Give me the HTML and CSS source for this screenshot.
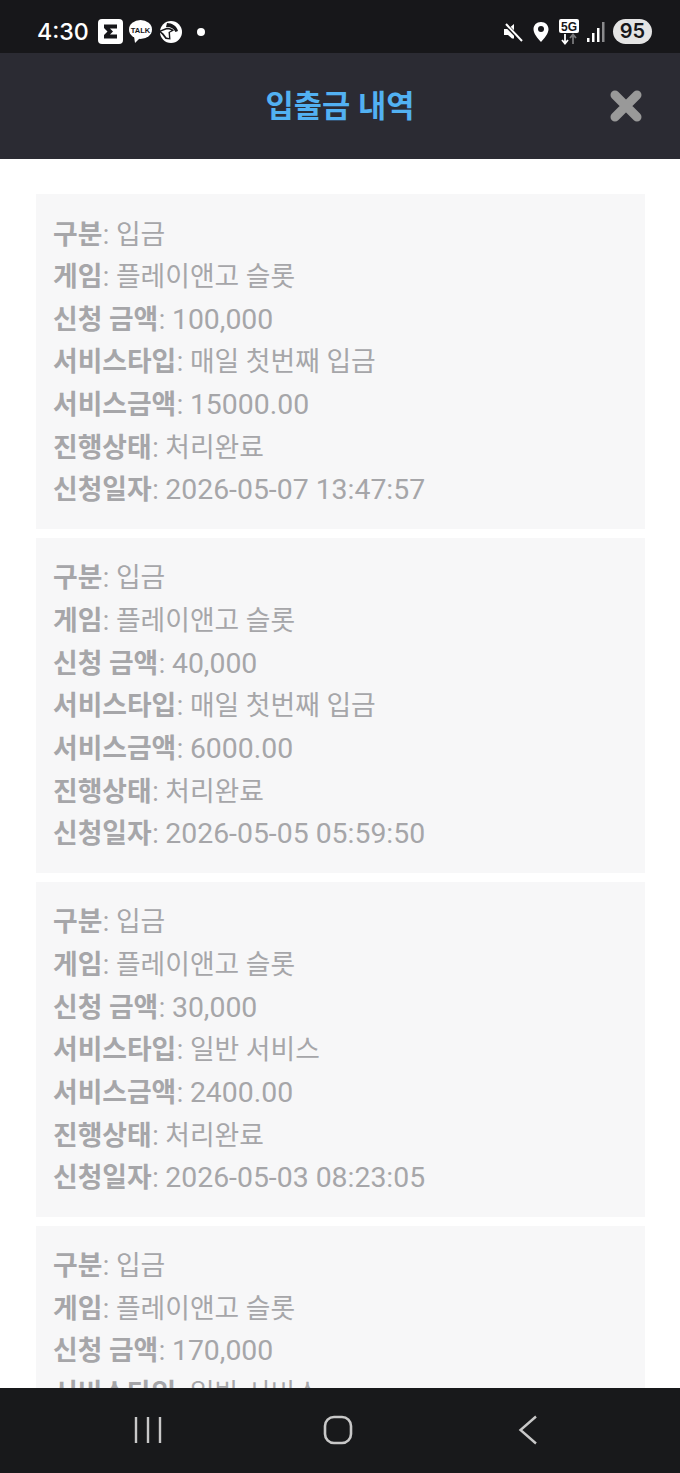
FILE: index.html
```html
<!DOCTYPE html>
<html lang="ko">
<head>
    <meta charset="UTF-8">
    <meta name="viewport" content="width=device-width, initial-scale=1.0">
    <title>입출금 내역</title>
    <link rel="stylesheet" href="styles.css">
</head>
<body>
    <div class="status-bar">
        <div class="status-left">
            <span class="clock">4:30</span>
            <svg class="status-icon" width="25" height="25" viewBox="0 0 25 25">
                <rect width="25" height="25" rx="4" fill="#fff"/>
                <path d="M6 5.500H19V9.500H12L15 12.500L12 15.500H19V19.500H6V16L9.500 12.500L6 9Z" fill="#17171a"/>
            </svg>
            <svg class="status-icon" width="23" height="23" viewBox="0 0 23 23">
                <ellipse cx="11.500" cy="9.500" rx="11.500" ry="9.500" fill="#fff"/>
                <path d="M5 16L6 23L11 18Z" fill="#fff"/>
                <text x="11.500" y="12.500" class="talk-label" text-anchor="middle">TALK</text>
            </svg>
            <svg class="status-icon" width="24" height="24" viewBox="0 0 24 24">
                <circle cx="13" cy="12" r="11" fill="#fff"/>
                <path d="M9 3C14 3 19 6 20 11L17.500 12C16 8.500 12 6.500 8 7Z" fill="#17171a"/>
                <path d="M0.500 11L8 8C11 7.500 14 8.500 16 10.500L12 12.500L12.500 19.500L7.500 19L4 14.500Z" fill="#17171a"/>
                <path d="M3 11.500L8.500 9.500C10.500 9.200 12.500 9.700 13.500 10.500L10.500 12L11 18L8.500 17.500L5.500 13.500Z" fill="#fff"/>
            </svg>
            <span class="status-dot"></span>
        </div>
        <div class="status-right">
            <svg class="mute-icon" width="20" height="22" viewBox="0 0 20 22">
                <path d="M0 8H4L10 3V17.500H8L4 14H0Z" fill="#fff"/>
                <path d="M1 3L18 20" stroke="#17171a" stroke-width="4"/>
                <path d="M2 3L18 20" stroke="#fff" stroke-width="2"/>
            </svg>
            <svg class="pin-icon" width="16" height="22" viewBox="0 0 16 22">
                <path d="M8 1C3.500 1 0.500 4.200 0.500 8.200C0.500 12.500 4.500 17 8 21C11.500 17 15.500 12.500 15.500 8.200C15.500 4.200 12.500 1 8 1Z" fill="#fff"/>
                <circle cx="8" cy="8" r="3" fill="#17171a"/>
            </svg>
            <svg class="network" width="20" height="26" viewBox="0 0 20 26">
                <rect width="20" height="14" rx="2" fill="#fff"/>
                <text x="10" y="11.500" class="net-label" text-anchor="middle">5G</text>
                <path d="M6 15V24M3 21L6 24.500L9 21" fill="none" stroke="#fff" stroke-width="1.800"/>
                <path d="M14 25V16M11 19L14 15.500L17 19" fill="none" stroke="#77777a" stroke-width="1.800"/>
            </svg>
            <svg width="18" height="20" viewBox="0 0 18 20">
                <rect x="0" y="16" width="2.500" height="4" fill="#fff"/>
                <rect x="5" y="11" width="2.500" height="9" fill="#fff"/>
                <rect x="10" y="6" width="2.500" height="14" fill="#fff"/>
                <rect x="15" y="0" width="2.500" height="20" fill="#8a8a8c"/>
            </svg>
            <span class="battery">95</span>
        </div>
    </div>

    <header class="title-bar">
        <h1>입출금 내역</h1>
        <button class="close-btn" aria-label="닫기">
            <svg width="34" height="34" viewBox="0 0 34 34">
                <path d="M6 6L28 28M28 6L6 28" stroke="#999" stroke-width="9" stroke-linecap="round"/>
            </svg>
        </button>
    </header>

    <main class="history">
        <div class="card">
            <p><b>구분</b>: 입금</p>
            <p><b>게임</b>: 플레이앤고 슬롯</p>
            <p><b>신청 금액</b>: <span class="num">100,000</span></p>
            <p><b>서비스타입</b>: 매일 첫번째 입금</p>
            <p><b>서비스금액</b>: <span class="num">15000.00</span></p>
            <p><b>진행상태</b>: 처리완료</p>
            <p><b>신청일자</b>: <span class="num">2026-05-07 13:47:57</span></p>
        </div>
        <div class="card">
            <p><b>구분</b>: 입금</p>
            <p><b>게임</b>: 플레이앤고 슬롯</p>
            <p><b>신청 금액</b>: <span class="num">40,000</span></p>
            <p><b>서비스타입</b>: 매일 첫번째 입금</p>
            <p><b>서비스금액</b>: <span class="num">6000.00</span></p>
            <p><b>진행상태</b>: 처리완료</p>
            <p><b>신청일자</b>: <span class="num">2026-05-05 05:59:50</span></p>
        </div>
        <div class="card">
            <p><b>구분</b>: 입금</p>
            <p><b>게임</b>: 플레이앤고 슬롯</p>
            <p><b>신청 금액</b>: <span class="num">30,000</span></p>
            <p><b>서비스타입</b>: 일반 서비스</p>
            <p><b>서비스금액</b>: <span class="num">2400.00</span></p>
            <p><b>진행상태</b>: 처리완료</p>
            <p><b>신청일자</b>: <span class="num">2026-05-03 08:23:05</span></p>
        </div>
        <div class="card">
            <p><b>구분</b>: 입금</p>
            <p><b>게임</b>: 플레이앤고 슬롯</p>
            <p><b>신청 금액</b>: <span class="num">170,000</span></p>
            <p><b>서비스타입</b>: 일반 서비스</p>
        </div>
    </main>

    <nav class="nav-bar">
        <svg class="nav-recent" width="28" height="28" viewBox="0 0 28 28">
            <path d="M2 1V27M14 1V27M26 1V27" stroke="#c8c8c8" stroke-width="2.400" fill="none"/>
        </svg>
        <svg class="nav-home" width="30" height="30" viewBox="0 0 30 30">
            <rect x="2" y="2" width="26" height="26" rx="9" stroke="#c8c8c8" stroke-width="2.600" fill="none"/>
        </svg>
        <svg class="nav-back" width="20" height="30" viewBox="0 0 20 30">
            <path d="M18 1.500L2.500 15L18 28.500" stroke="#c8c8c8" stroke-width="2.400" fill="none"/>
        </svg>
    </nav>
</body>
</html>
```

FILE: styles.css
```css
html, body {
    margin: 0;
    height: 1473px;
}
body {
    font-family: Roboto, 'Noto Sans CJK KR', sans-serif;
    display: flex;
    flex-direction: column;
    overflow: hidden;
    background: #ffffff;
}
.status-bar {
    height: 53px;
    box-sizing: border-box;
    flex-shrink: 0;
    background: #17171a;
    color: #ffffff;
    display: flex;
    justify-content: space-between;
    align-items: center;
    padding: 10px 28px 0 37px;
}
.status-left, .status-right {
    display: flex;
    align-items: center;
}
.status-left {
    gap: 6px;
}
.status-right {
    gap: 8px;
}
.clock {
    font-family: Inter, Roboto, sans-serif;
    font-size: 23.200px;
    font-weight: 500;
    margin-right: 3px;
}
.talk-label {
    font-family: 'Liberation Sans', sans-serif;
    font-size: 7.500px;
    font-weight: 700;
    fill: #17171a;
}
.net-label {
    font-family: 'Liberation Sans', sans-serif;
    font-size: 12px;
    font-weight: 700;
    fill: #17171a;
}
.status-dot {
    width: 8px;
    height: 8px;
    border-radius: 50%;
    background: #ffffff;
    margin-left: 9px;
}
.mute-icon {
    margin-right: 1px;
}
.pin-icon {
    margin-right: 2px;
}
.battery {
    width: 39px;
    height: 25px;
    border-radius: 13px;
    background: #e4e4e4;
    color: #17171a;
    font-family: Inter, Roboto, sans-serif;
    font-size: 20px;
    font-weight: 600;
    text-align: center;
    line-height: 25px;
}
.title-bar {
    height: 106px;
    flex-shrink: 0;
    background: #2b2b33;
    display: flex;
    justify-content: center;
    align-items: center;
    position: relative;
}
.title-bar h1 {
    margin: 0 0 5px;
    font-size: 30.700px;
    font-weight: 700;
    color: #52b1f2;
}
.close-btn {
    position: absolute;
    right: 37px;
    top: 36px;
    padding: 0;
    border: none;
    background: none;
    line-height: 0;
}
.history {
    flex: 1;
    min-height: 0;
    overflow: hidden;
    padding: 35px 35px 0 36px;
}
.card {
    background: #f7f7f8;
    padding: 19.500px 17px 16.800px;
    margin-bottom: 9px;
}
.card p {
    margin: 0;
    height: 42.670px;
    line-height: 42.670px;
    font-size: 26.800px;
    color: #a6a6a9;
    white-space: nowrap;
}
.card b {
    font-weight: 700;
    margin-right: 0.500px;
}
.num {
    font-size: 28.400px;
    line-height: 1;
}
.nav-bar {
    height: 85px;
    flex-shrink: 0;
    background: #18191b;
    display: grid;
    grid-template-columns: 296px 84px 296px;
    justify-items: center;
    align-items: center;
}
.nav-recent, .nav-home, .nav-back {
    margin-bottom: 2px;
}
```
